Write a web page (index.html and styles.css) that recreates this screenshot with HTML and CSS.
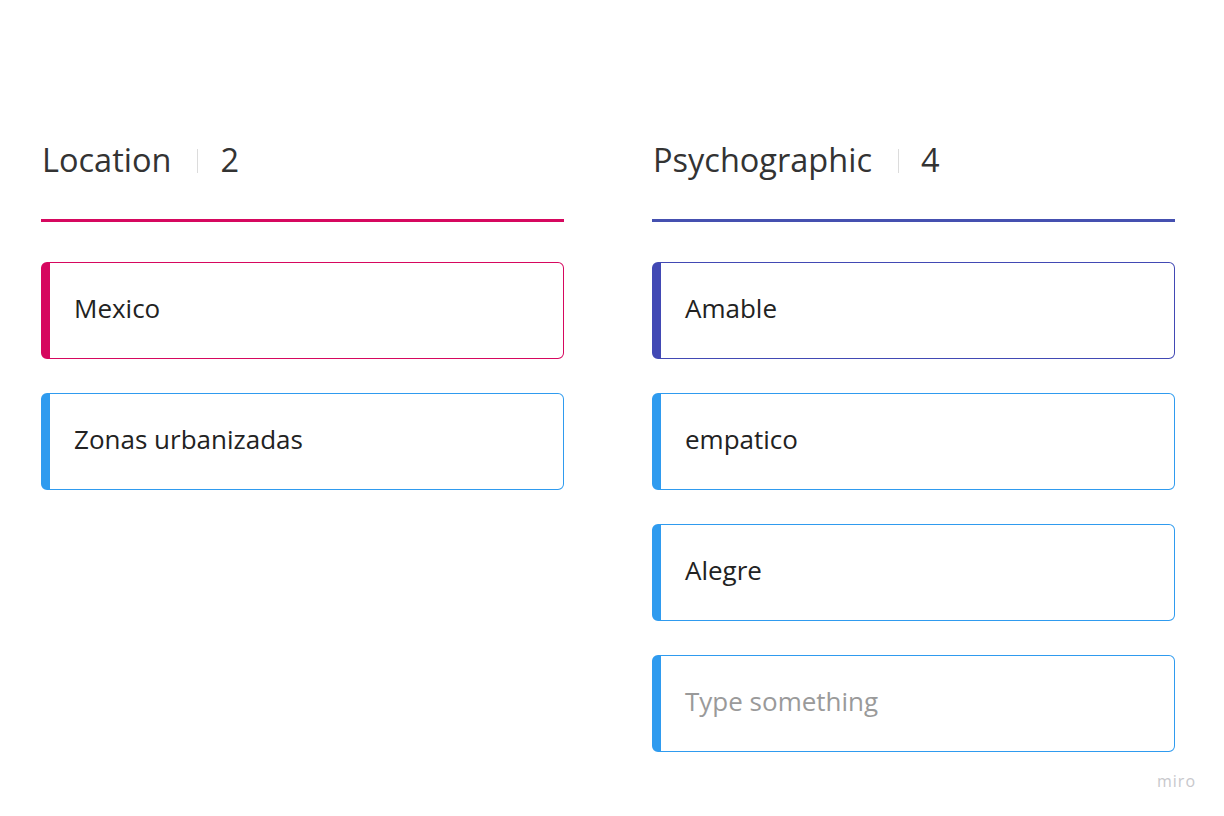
FILE: index.html
```html
<!DOCTYPE html>
<html>
<head>
<meta charset="utf-8">
<link rel="stylesheet" href="styles.css">
</head>
<body>
<div class="board">
  <section class="column col-location">
    <header class="col-header">
      <span class="col-title">Location</span>
      <span class="col-sep"></span>
      <span class="col-count">2</span>
    </header>
    <div class="col-rule"></div>
    <div class="cards">
      <div class="card card-pink">Mexico</div>
      <div class="card card-blue">Zonas urbanizadas</div>
    </div>
  </section>
  <section class="column col-psycho">
    <header class="col-header">
      <span class="col-title">Psychographic</span>
      <span class="col-sep"></span>
      <span class="col-count">4</span>
    </header>
    <div class="col-rule"></div>
    <div class="cards">
      <div class="card card-indigo">Amable</div>
      <div class="card card-blue">empatico</div>
      <div class="card card-blue">Alegre</div>
      <div class="card card-blue placeholder">Type something</div>
    </div>
  </section>
</div>
<div class="watermark">miro</div>
</body>
</html>
```

FILE: styles.css
```css
html, body {
  margin: 0;
  padding: 0;
  background: #ffffff;
  font-family: "Open Sans", "Noto Sans", sans-serif;
}
body {
  width: 1224px;
  height: 816px;
  position: relative;
  overflow: hidden;
}
.board {
  display: flex;
  gap: 88px;
  padding: 138px 0 0 41px;
}
.column {
  width: 523px;
  display: flex;
  flex-direction: column;
}
.col-header {
  display: flex;
  align-items: center;
  height: 44px;
  padding-left: 1px;
  font-size: 32.5px;
  line-height: 44px;
  color: #333333;
}
.col-sep {
  display: inline-block;
  width: 1px;
  height: 24px;
  background: #dcdcdc;
  margin: 2px 22px 0 26px;
}
.col-rule {
  height: 3px;
  margin-top: 37px;
  margin-bottom: 40px;
}
.col-location .col-rule { background: #d6085f; }
.col-psycho .col-rule { background: #4550b0; }
.cards {
  display: flex;
  flex-direction: column;
  gap: 34px;
}
.card {
  height: 97px;
  box-sizing: border-box;
  border: 1.5px solid;
  border-left-width: 9px;
  border-radius: 6px;
  display: flex;
  align-items: center;
  padding: 0 0 5px 24px;
  font-size: 26px;
  color: #222222;
}
.card-pink { border-color: #d6085f; }
.card-indigo { border-color: #4249b4; }
.card-blue { border-color: #2f9bef; }
.placeholder { color: #9a9a9a; }
.watermark {
  position: absolute;
  right: 28px;
  bottom: 24px;
  font-size: 16px;
  letter-spacing: 1px;
  color: #c8c8cc;
  font-family: "Open Sans", "Noto Sans", sans-serif;
}
```
